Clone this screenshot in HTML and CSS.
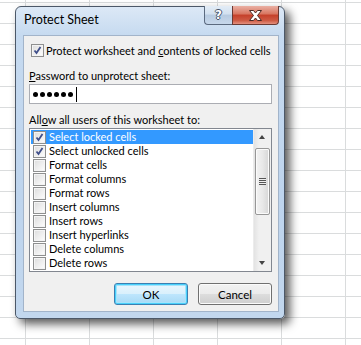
FILE: index.html
```html
<!DOCTYPE html>
<html lang="en">
<head>
    <meta charset="UTF-8">
    <title>Protect Sheet</title>
    <link rel="stylesheet" href="styles.css">
</head>
<body>
    <div class="dialog">
        <div class="titlebar">
            <span class="title">Protect Sheet</span>
            <div class="caption-buttons">
                <div class="cap-btn help"><span>?</span></div>
                <div class="cap-btn close">
                    <svg width="15" height="11" viewBox="0 0 15 11">
                        <path d="M1.5 0.5h4l2 2.5 2-2.5h4l-4 5 4 5h-4l-2-2.5-2 2.5h-4l4-5z" fill="#fff" stroke="#4a2a25" stroke-width="1"/>
                    </svg>
                </div>
            </div>
        </div>
        <div class="content">
            <div class="check-row">
                <span class="checkbox checked"></span>
                <span>Protect worksheet and <u>c</u>ontents of locked cells</span>
            </div>
            <div class="label label-pw"><u>P</u>assword to unprotect sheet:</div>
            <div class="textbox">
                <span class="dot"></span><span class="dot"></span><span class="dot"></span>
                <span class="dot"></span><span class="dot"></span><span class="dot"></span>
                <span class="caret"></span>
            </div>
            <div class="label label-allow">All<u>o</u>w all users of this worksheet to:</div>
            <div class="listbox">
                <div class="items">
                    <div class="item selected"><span class="checkbox checked"></span>Select locked cells</div>
                    <div class="item"><span class="checkbox checked"></span>Select unlocked cells</div>
                    <div class="item"><span class="checkbox"></span>Format cells</div>
                    <div class="item"><span class="checkbox"></span>Format columns</div>
                    <div class="item"><span class="checkbox"></span>Format rows</div>
                    <div class="item"><span class="checkbox"></span>Insert columns</div>
                    <div class="item"><span class="checkbox"></span>Insert rows</div>
                    <div class="item"><span class="checkbox"></span>Insert hyperlinks</div>
                    <div class="item"><span class="checkbox"></span>Delete columns</div>
                    <div class="item"><span class="checkbox"></span>Delete rows</div>
                </div>
                <div class="scrollbar">
                    <div class="arrow up"></div>
                    <div class="track">
                        <div class="thumb"><span class="grip"></span></div>
                    </div>
                    <div class="arrow down"></div>
                </div>
            </div>
            <div class="buttons">
                <button class="btn default">OK</button>
                <button class="btn">Cancel</button>
            </div>
        </div>
    </div>
</body>
</html>
```

FILE: styles.css
```css
html, body {
    margin: 0;
    width: 361px;
    height: 345px;
    overflow: hidden;
}
body {
    position: relative;
    background-color: #fff;
    background-image:
        linear-gradient(to right, #dadcdd 1px, transparent 1px),
        linear-gradient(to bottom, #dadcdd 1px, transparent 1px);
    background-size: 64px 21px;
    background-position: 25px 2px;
    font-family: Lato, "Noto Sans", sans-serif;
    font-size: 11px;
    color: #000;
    white-space: nowrap;
}
.dialog {
    position: absolute;
    left: 15px;
    top: 6px;
    width: 270px;
    height: 313px;
    box-sizing: border-box;
    padding: 0 5px 6px 7px;
    border: 1px solid #4c5868;
    border-radius: 6px 6px 5px 5px;
    background: linear-gradient(#dce8f6, #c6daf0 28px, #bed4ed 60%, #c2d7ee);
    box-shadow: 5px 5px 10px rgba(0, 0, 0, 0.65);
    display: flex;
    flex-direction: column;
}
.titlebar {
    position: relative;
    height: 28px;
    flex: none;
    padding: 5px 0 0 1px;
    box-sizing: border-box;
}
.title {
    font-size: 12.5px;
    line-height: 16px;
}
.caption-buttons {
    position: absolute;
    top: -1px;
    right: 0;
    display: flex;
}
.cap-btn {
    height: 19px;
    box-sizing: border-box;
    border: 1px solid #5b6a7f;
    border-top: none;
    display: flex;
    align-items: center;
    justify-content: center;
}
.help {
    width: 28px;
    border-right: none;
    border-bottom-left-radius: 4px;
    background: linear-gradient(#e3ecf6, #d2e0ef 45%, #b7cae0 50%, #c7d8eb);
}
.help span {
    font-family: "DejaVu Sans", sans-serif;
    font-weight: bold;
    font-size: 12px;
    color: #fff;
    line-height: 12px;
    text-shadow: 1px 0 #45556b, -1px 0 #45556b, 0 1px #45556b, 0 -1px #45556b;
}
.close {
    width: 47px;
    border-bottom-right-radius: 4px;
    border-color: #6b3a33;
    background: linear-gradient(#eab0a4, #d8755f 45%, #c5402a 50%, #cd5a43 80%, #e4907e);
}
.content {
    flex: 1;
    background: #f0f0f0;
    border: 1px solid #a2b4ca;
    display: flex;
    flex-direction: column;
    padding: 0 6px 0 5px;
}
.checkbox {
    width: 13px;
    height: 13px;
    box-sizing: border-box;
    border: 1px solid #8e8f8f;
    background: linear-gradient(135deg, #dcdcdc, #f4f4f4 70%, #fff);
    box-shadow: inset 0 0 0 1px #f4f4f4;
    flex: none;
}
.checkbox.checked {
    background:
        url("data:image/svg+xml,%3Csvg xmlns='http://www.w3.org/2000/svg' width='11' height='11'%3E%3Cpath d='M2.5 5.5l2 2.5 4-6' fill='none' stroke='%23404f8a' stroke-width='1.8'/%3E%3C/svg%3E") center/11px 11px no-repeat,
        linear-gradient(135deg, #dcdcdc, #f4f4f4 70%, #fff);
}
.check-row {
    display: flex;
    align-items: center;
    gap: 2px;
    margin: 7px 0 0 2px;
    line-height: 15px;
}
.label {
    line-height: 15px;
}
.label-pw {
    margin-top: 10px;
}
.textbox {
    margin-top: 1px;
    height: 20px;
    box-sizing: border-box;
    border: 1px solid #abadb3;
    background: #fff;
    display: flex;
    align-items: center;
    gap: 2px;
    padding-left: 3px;
}
.dot {
    width: 5px;
    height: 5px;
    border-radius: 50%;
    background: #000;
}
.caret {
    width: 1px;
    height: 15px;
    background: #000;
    margin-left: 1px;
}
.label-allow {
    margin-top: 8px;
}
.listbox {
    margin-top: 1px;
    height: 144px;
    box-sizing: border-box;
    border: 1px solid #828790;
    background: #fff;
    display: flex;
}
.items {
    flex: 1;
    padding: 1px 0 1px 1px;
}
.item {
    height: 14px;
    line-height: 14px;
    display: flex;
    align-items: center;
    gap: 3px;
    padding-left: 2px;
}
.item.selected {
    background: #3399ff;
    color: #fff;
}
.scrollbar {
    width: 17px;
    flex: none;
    display: flex;
    flex-direction: column;
    background: linear-gradient(to right, #e3e3e3, #f0f0f0 30%, #f0f0f0);
    border-left: 1px solid #ececec;
}
.arrow {
    height: 17px;
    position: relative;
}
.arrow::after {
    content: "";
    position: absolute;
    left: 5px;
    border-left: 3px solid transparent;
    border-right: 3px solid transparent;
}
.arrow.up::after {
    top: 6px;
    border-bottom: 4px solid #444;
}
.arrow.down::after {
    top: 7px;
    border-top: 4px solid #444;
}
.track {
    flex: 1;
    padding-top: 2px;
}
.thumb {
    height: 67px;
    margin: 0 1px;
    box-sizing: border-box;
    border: 1px solid #979797;
    border-radius: 2px;
    background: linear-gradient(to right, #f3f3f3, #e8e8e8 50%, #d6d6d6);
    box-shadow: inset 0 0 0 1px #fbfbfb;
    display: flex;
    align-items: center;
    justify-content: center;
}
.grip {
    width: 7px;
    height: 7px;
    background: repeating-linear-gradient(#555 0 1px, #eee 1px 2px);
}
.buttons {
    display: flex;
    justify-content: flex-end;
    gap: 10px;
    margin-top: 11px;
}
.btn {
    width: 74px;
    height: 22px;
    box-sizing: border-box;
    border: 1px solid #707070;
    border-radius: 3px;
    background: linear-gradient(#f2f2f2, #ebebeb 50%, #dddddd 50%, #cfcfcf);
    box-shadow: inset 0 0 0 1px #fbfbfb;
    font-family: inherit;
    font-size: 11.5px;
    color: #000;
    padding: 0;
}
.btn.default {
    border-color: #3c7fb1;
    box-shadow: inset 0 0 0 1px #48d0fb, inset 0 0 0 2px #a6e3fb;
    background: linear-gradient(#eaf6fd, #d9f0fc 50%, #bee6fd 50%, #a7d9f5);
}
```
